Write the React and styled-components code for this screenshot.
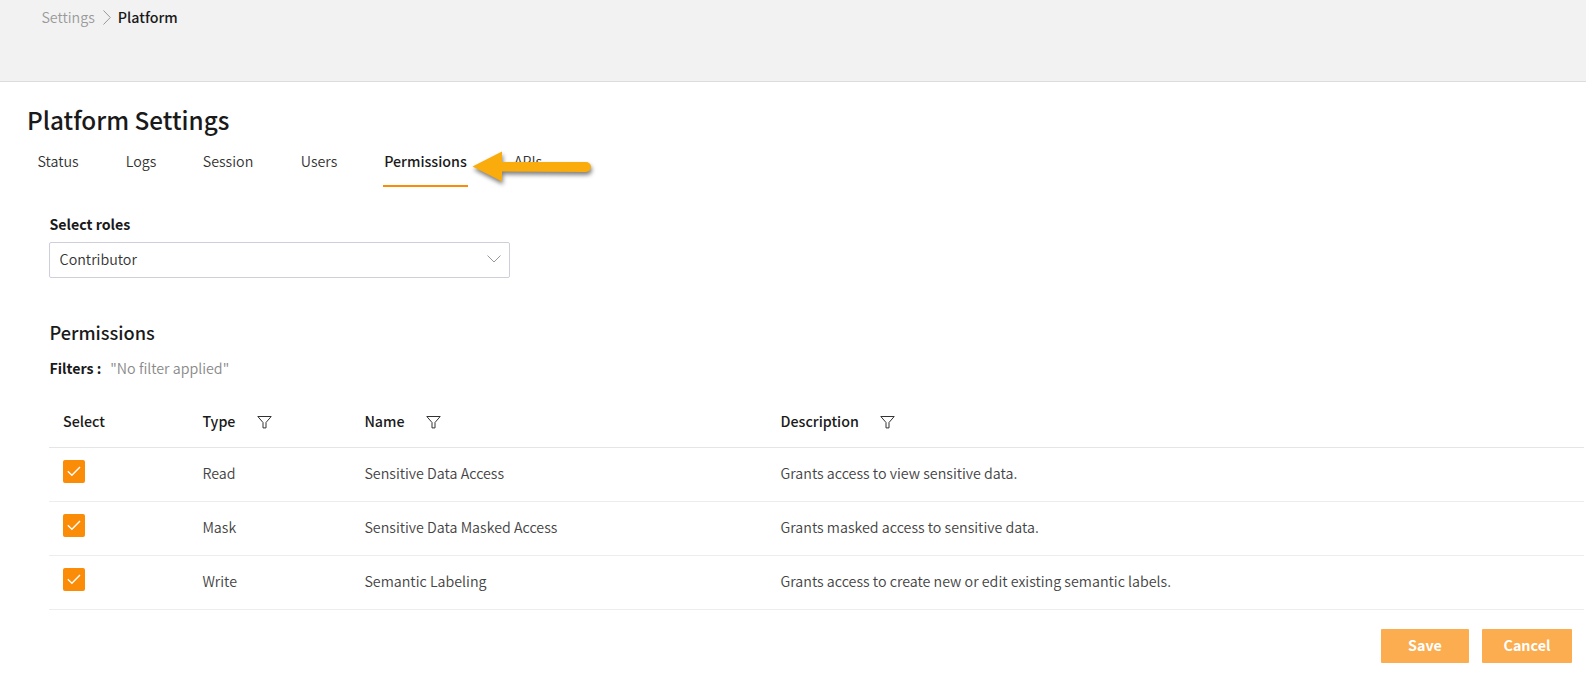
import React from "react";
import styled, { createGlobalStyle } from "styled-components";

const GlobalStyle = createGlobalStyle`
  * { box-sizing: border-box; }
  body {
    margin: 0;
    background: #fff;
    color: #1a1a1a;
    font-family: "Noto Sans CJK SC", "Noto Sans", sans-serif;
    font-size: 14.28px;
    font-weight: 350;
    line-height: 20px;
    overflow: hidden;
  }
  button { font-family: inherit; }
`;

const Page = styled.div`
  width: 100%;
  height: 674px;
  overflow: hidden;
`;

const TopBar = styled.header`
  display: flex;
  align-items: flex-start;
  height: 82px;
  padding: 7px 0 0 41.4px;
  background: #f2f2f2;
  border-bottom: 1px solid #dcdcdc;
`;

const Crumb = styled.span`
  color: ${(p) => (p.$current ? "#1a1a1a" : "#9a9a9a")};
  font-weight: ${(p) => (p.$current ? 500 : 350)};
`;

const CrumbArrow = styled.svg`
  width: 8px;
  height: 15px;
  margin: 3px 7px 0 8px;
`;

const Title = styled.h1`
  margin: 20px 0 0 27px;
  font-size: 24.3px;
  font-weight: 500;
  line-height: 36px;
`;

const Tabs = styled.nav`
  position: relative;
  display: flex;
  height: 49px;
  margin-left: 33px;
  padding-top: 9px;
`;

const Tab = styled.div`
  width: ${(p) => p.$width}px;
  height: 40px;
  margin-right: ${(p) => p.$gap}px;
  padding-top: 4px;
  text-align: center;
  font-weight: ${(p) => (p.$active ? 500 : 350)};
  color: ${(p) => (p.$active ? "#1a1a1a" : "#333")};
  border-bottom: 2px solid ${(p) => (p.$active ? "#fa8c08" : "transparent")};
`;

const Pointer = styled.svg`
  position: absolute;
  left: 435px;
  top: 5px;
  width: 130px;
  height: 45px;
  filter: drop-shadow(1px 3px 2px rgba(0, 0, 0, 0.5));
`;

const Content = styled.main`
  margin: 27px 2px 0 49px;
`;

const Label = styled.span`
  display: block;
  padding-left: 0.4px;
  font-weight: 700;
  font-size: 14.2px;
`;

const SelectBox = styled.div`
  display: flex;
  align-items: center;
  justify-content: space-between;
  width: 461px;
  height: 36px;
  margin-top: 8px;
  padding: 0 8px 2px 9.6px;
  border: 1px solid #cfcfdc;
  border-radius: 2px;
  color: #333;
`;

const Heading = styled.h2`
  margin: 41px 0 0;
  padding-left: 0.4px;
  font-size: 18.2px;
  font-weight: 500;
  line-height: 26px;
`;

const Filters = styled.div`
  display: flex;
  gap: 9px;
  margin-top: 13px;
`;

const Muted = styled.span`
  color: #8a8a8a;
`;

const Table = styled.div`
  margin-top: 26px;
`;

const Row = styled.div`
  display: grid;
  grid-template-columns: 139.4px 162px 416.2px 1fr;
  height: ${(p) => (p.$head ? 44 : 54)}px;
  padding: ${(p) => (p.$head ? 7 : 15)}px 0 0 14px;
  border-bottom: 1px solid ${(p) => (p.$head ? "#e5e5e5" : "#ededed")};
  color: ${(p) => (p.$head ? "#1a1a1a" : "#444")};
  font-weight: ${(p) => (p.$head ? 500 : 350)};
`;

const HeadCell = styled.div`
  display: flex;
  gap: 21.4px;
`;

const Check = styled.div`
  display: flex;
  align-items: center;
  justify-content: center;
  width: 22px;
  height: 23px;
  margin-top: -3px;
  border-radius: 2px;
  background: #fa8c08;
`;

const Funnel = styled.svg`
  width: 15px;
  height: 13px;
  margin-top: 5px;
`;

const Actions = styled.div`
  display: flex;
  justify-content: flex-end;
  gap: 13px;
  margin: 19px 12px 0 0;
`;

const Button = styled.button`
  width: ${(p) => p.$width}px;
  height: 34px;
  padding: 0 0 2px;
  border: 0;
  border-radius: 1px;
  background: #fbad50;
  color: #fff;
  font-size: 14.3px;
  font-weight: 700;
  line-height: 32px;
`;

const tabs = [
  { name: "Status", width: 50, gap: 38 },
  { name: "Logs", width: 40, gap: 37 },
  { name: "Session", width: 60, gap: 37 },
  { name: "Users", width: 48, gap: 40 },
  { name: "Permissions", width: 85, gap: 42, active: true },
  { name: "APIs", width: 36, gap: 0 },
];

const columns = ["Type", "Name", "Description"];

const rows = [
  ["Read", "Sensitive Data Access", "Grants access to view sensitive data."],
  ["Mask", "Sensitive Data Masked Access", "Grants masked access to sensitive data."],
  ["Write", "Semantic Labeling", "Grants access to create new or edit existing semantic labels."],
];

const FilterIcon = () => (
  <Funnel viewBox="0 0 15 13" fill="none" stroke="#333" strokeWidth="1">
    <path d="M.8 .5H14.2L9 6.5V11.9H6V6.5Z" />
  </Funnel>
);

export default function App() {
  return (
    <Page>
      <GlobalStyle />
      <TopBar>
        <Crumb>Settings</Crumb>
        <CrumbArrow viewBox="0 0 8 15" fill="none" stroke="#999">
          <path d="M.5 .5 7.3 7.5 .5 14.5" />
        </CrumbArrow>
        <Crumb $current>Platform</Crumb>
      </TopBar>
      <Title>Platform Settings</Title>
      <Tabs>
        {tabs.map((t) => (
          <Tab key={t.name} $width={t.width} $gap={t.gap} $active={t.active}>
            {t.name}
          </Tab>
        ))}
        <Pointer viewBox="0 0 130 45" fill="#f9ac0b">
          <path d="M4.5 23.5 34 8.5V19H118a5 5 0 0 1 0 10L34 28.5V38.5Z" />
        </Pointer>
      </Tabs>
      <Content>
        <Label>Select roles</Label>
        <SelectBox>
          Contributor
          <svg width="14" height="8" viewBox="0 0 14 8" fill="none" stroke="#999">
            <path d="M.5 .5 7 7 13.5 .5" />
          </svg>
        </SelectBox>
        <Heading>Permissions</Heading>
        <Filters>
          <Label>Filters :</Label>
          <Muted>"No filter applied"</Muted>
        </Filters>
        <Table>
          <Row $head>
            <span>Select</span>
            {columns.map((c) => (
              <HeadCell key={c}>
                {c}
                <FilterIcon />
              </HeadCell>
            ))}
          </Row>
          {rows.map((r) => (
            <Row key={r[0]}>
              <Check>
                <svg width="14" height="11" viewBox="0 0 14 11" fill="none" stroke="#fff" strokeWidth="1.4">
                  <path d="M.8 5.2 4.9 9.2 13 1" />
                </svg>
              </Check>
              {r.map((cell) => (
                <span key={cell}>{cell}</span>
              ))}
            </Row>
          ))}
        </Table>
        <Actions>
          <Button $width={88}>Save</Button>
          <Button $width={90}>Cancel</Button>
        </Actions>
      </Content>
    </Page>
  );
}
